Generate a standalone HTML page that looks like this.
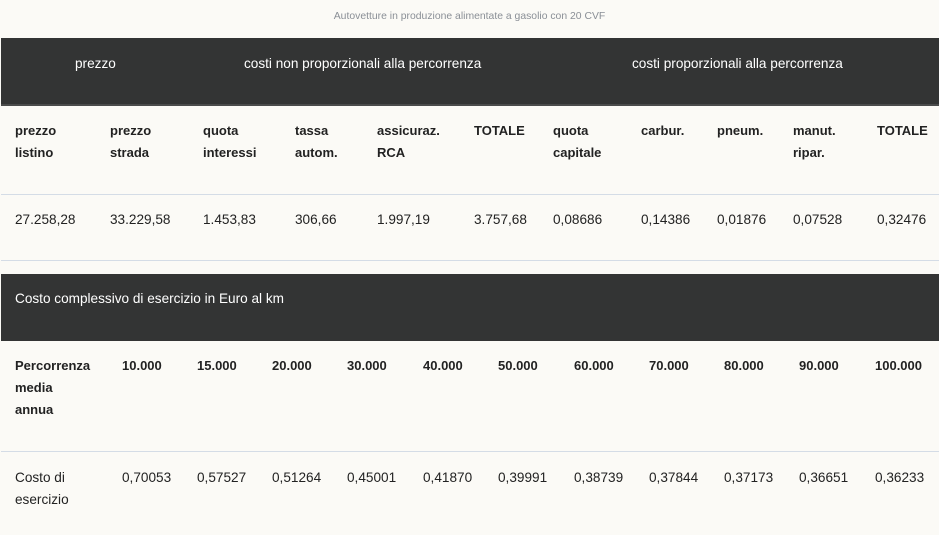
<!DOCTYPE html>
<html><head><meta charset="utf-8"><style>
*{margin:0;padding:0;box-sizing:border-box}
body{width:939px;height:535px;background:#fbfaf6;font-family:"Liberation Sans",sans-serif;font-size:13.6px;color:#222;position:relative;overflow:hidden}
.a{position:absolute;white-space:nowrap;line-height:22px}
.d{position:absolute;left:1px;right:0;background:#333434}
.l{position:absolute;left:1px;right:0;height:1px;background:#d4dce6}
.w{color:#fff}
.b{font-weight:bold;font-size:13px}
.cap{position:absolute;top:11px;left:0;width:939px;text-align:center;font-size:10.4px;color:#8a8f96}
</style></head><body>
<div class="cap">Autovetture in produzione alimentate a gasolio con 20 CVF</div>
<div class="d" style="top:38px;height:68px;border-bottom:2px solid #4a4b4b"></div>
<div class="a w" style="left:75px;top:53px">prezzo</div>
<div class="a w" style="left:244px;top:53px">costi non proporzionali alla percorrenza</div>
<div class="a w" style="left:632px;top:53px">costi proporzionali alla percorrenza</div>

<div class="a b" style="left:15px;top:120px">prezzo<br>listino</div>
<div class="a b" style="left:110px;top:120px">prezzo<br>strada</div>
<div class="a b" style="left:203px;top:120px">quota<br>interessi</div>
<div class="a b" style="left:295px;top:120px">tassa<br>autom.</div>
<div class="a b" style="left:377px;top:120px">assicuraz.<br>RCA</div>
<div class="a b" style="left:474px;top:120px">TOTALE</div>
<div class="a b" style="left:553px;top:120px">quota<br>capitale</div>
<div class="a b" style="left:641px;top:120px">carbur.</div>
<div class="a b" style="left:717px;top:120px">pneum.</div>
<div class="a b" style="left:793px;top:120px">manut.<br>ripar.</div>
<div class="a b" style="left:877px;top:120px">TOTALE</div>
<div class="l" style="top:194px"></div>
<div class="a" style="left:15px;top:209px">27.258,28</div>
<div class="a" style="left:110px;top:209px">33.229,58</div>
<div class="a" style="left:203px;top:209px">1.453,83</div>
<div class="a" style="left:295px;top:209px">306,66</div>
<div class="a" style="left:377px;top:209px">1.997,19</div>
<div class="a" style="left:474px;top:209px">3.757,68</div>
<div class="a" style="left:553px;top:209px">0,08686</div>
<div class="a" style="left:641px;top:209px">0,14386</div>
<div class="a" style="left:717px;top:209px">0,01876</div>
<div class="a" style="left:793px;top:209px">0,07528</div>
<div class="a" style="left:877px;top:209px">0,32476</div>
<div class="l" style="top:260px"></div>

<div class="d" style="top:274px;height:67px"></div>
<div class="a w" style="left:15px;top:288px">Costo complessivo di esercizio in Euro al km</div>

<div class="a b" style="left:15px;top:355px">Percorrenza<br>media<br>annua</div>
<div class="a b" style="left:122px;top:355px">10.000</div>
<div class="a b" style="left:197px;top:355px">15.000</div>
<div class="a b" style="left:272px;top:355px">20.000</div>
<div class="a b" style="left:347px;top:355px">30.000</div>
<div class="a b" style="left:423px;top:355px">40.000</div>
<div class="a b" style="left:498px;top:355px">50.000</div>
<div class="a b" style="left:574px;top:355px">60.000</div>
<div class="a b" style="left:649px;top:355px">70.000</div>
<div class="a b" style="left:724px;top:355px">80.000</div>
<div class="a b" style="left:799px;top:355px">90.000</div>
<div class="a b" style="left:875px;top:355px">100.000</div>
<div class="l" style="top:451px"></div>
<div class="a" style="left:15px;top:467px">Costo di<br>esercizio</div>
<div class="a" style="left:122px;top:467px">0,70053</div>
<div class="a" style="left:197px;top:467px">0,57527</div>
<div class="a" style="left:272px;top:467px">0,51264</div>
<div class="a" style="left:347px;top:467px">0,45001</div>
<div class="a" style="left:423px;top:467px">0,41870</div>
<div class="a" style="left:498px;top:467px">0,39991</div>
<div class="a" style="left:574px;top:467px">0,38739</div>
<div class="a" style="left:649px;top:467px">0,37844</div>
<div class="a" style="left:724px;top:467px">0,37173</div>
<div class="a" style="left:799px;top:467px">0,36651</div>
<div class="a" style="left:875px;top:467px">0,36233</div>
</body></html>
